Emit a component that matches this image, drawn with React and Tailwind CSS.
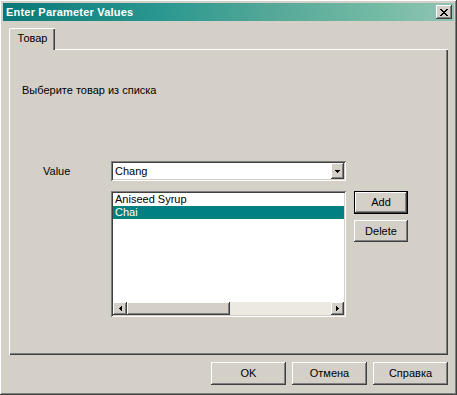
import React from "react";

const raised =
  "shadow-[inset_-1px_-1px_#404040,inset_1px_1px_#ffffff,inset_-2px_-2px_#808080]";
const sunken =
  "shadow-[inset_1px_1px_#808080,inset_-1px_-1px_#ffffff,inset_2px_2px_#404040,inset_-2px_-2px_#d4d0c8]";

function Button({ children, className = "" }) {
  return (
    <button
      className={`bg-[#d4d0c8] ${raised} flex items-center justify-center font-normal text-[11px] leading-[13px] text-black ${className}`}
    >
      {children}
    </button>
  );
}

export default function App() {
  return (
    <div
      className="w-[457px] h-[395px] bg-[#d4d0c8] p-[3px] flex flex-col shadow-[inset_-1px_-1px_#404040,inset_1px_1px_#ffffff,inset_-2px_-2px_#808080] text-black"
      style={{ fontFamily: '"Liberation Sans", Arial, sans-serif' }}
    >
      {/* title bar */}
      <div className="h-[18px] flex items-center justify-between pl-[3px] pr-[2px] bg-[linear-gradient(90deg,#0a7878_0%,#2a9890_35%,#55a898_60%,#76bca6_85%,#92c4b6_100%)]">
        <span className="text-white font-bold text-[11px] leading-[14px] tracking-[0.2px]">
          Enter Parameter Values
        </span>
        <button className={`w-[16px] h-[14px] bg-[#d4d0c8] ${raised} flex items-center justify-center`}>
          <svg width="8" height="7" viewBox="0 0 8 7" shapeRendering="crispEdges">
            <path d="M0 0h2v1h-2zM6 0h2v1h-2zM1 1h2v1h-2zM5 1h2v1h-2zM2 2h4v1h-4zM3 3h2v1h-2zM2 4h4v1h-4zM1 5h2v1h-2zM5 5h2v1h-2zM0 6h2v1h-2zM6 6h2v1h-2z" fill="#000" />
          </svg>
        </button>
      </div>

      {/* tab strip */}
      <div className="mt-[7px] ml-[6px] flex relative z-10 -mb-[1px]">
        <div className="w-[46px] h-[22px] bg-[#d4d0c8] border-t border-l border-white rounded-tl-[2px] shadow-[inset_-1px_0_#404040,inset_-2px_0_#808080] flex items-center justify-center text-[11px] leading-[13px] pb-[2px]">
          Товар
        </div>
      </div>

      {/* tab panel */}
      <div className="ml-[6px] w-[439px] h-[306px] border-t border-l border-white shadow-[inset_-1px_-1px_#404040,inset_-2px_-2px_#808080] pt-[34px] flex flex-col">
        <div className="pl-[12px] text-[11px] leading-[13px]">Выберите товар из списка</div>

        <div className="mt-[64px] flex items-center">
          <div className="w-[101px] pl-[33px] text-[11px] leading-[13px]">Value</div>
          <div className={`w-[235px] h-[20px] bg-white ${sunken} p-[2px] flex items-center`}>
            <span className="flex-1 pl-[2px] text-[11px] leading-[13px]">Chang</span>
            <div className={`w-[13px] h-[16px] bg-[#d4d0c8] ${raised} flex items-center justify-center`}>
              <svg width="5" height="3" viewBox="0 0 5 3" shapeRendering="crispEdges">
                <path d="M0 0h5v1h-5zM1 1h3v1h-3zM2 2h1v1h-1z" fill="#000" />
              </svg>
            </div>
          </div>
        </div>

        <div className="mt-[10px] flex items-start">
          <div className="w-[101px]" />
          <div className={`w-[235px] h-[126px] bg-white ${sunken} p-[2px] flex flex-col`}>
            <div className="flex-1 flex flex-col text-[11px] leading-[13px]">
              <div className="h-[13px] pl-[2px]">Aniseed Syrup</div>
              <div className="h-[13px] pl-[2px] bg-[#008080] text-white">Chai</div>
            </div>
            <div className="h-[13px] flex bg-[#ece9e1]">
              <div className={`w-[14px] h-[13px] bg-[#d4d0c8] ${raised} flex items-center justify-center`}>
                <svg width="3" height="5" viewBox="0 0 3 5" shapeRendering="crispEdges">
                  <path d="M2 0h1v5h-1zM1 1h1v3h-1zM0 2h1v1h-1z" fill="#000" />
                </svg>
              </div>
              <div className={`w-[103px] h-[13px] bg-[#d4d0c8] ${raised}`} />
              <div className="flex-1" />
              <div className={`w-[13px] h-[13px] bg-[#d4d0c8] ${raised} flex items-center justify-center`}>
                <svg width="3" height="5" viewBox="0 0 3 5" shapeRendering="crispEdges">
                  <path d="M0 0h1v5h-1zM1 1h1v3h-1zM2 2h1v1h-1z" fill="#000" />
                </svg>
              </div>
            </div>
          </div>
          <div className="ml-[8px] flex flex-col gap-[6px]">
            <div className="border border-black">
              <Button className="w-[52px] h-[21px]">Add</Button>
            </div>
            <Button className="w-[54px] h-[22px]">Delete</Button>
          </div>
        </div>
      </div>

      {/* bottom buttons */}
      <div className="mt-[7px] mr-[6px] flex justify-end gap-[6px]">
        <Button className="w-[75px] h-[23px]">OK</Button>
        <Button className="w-[75px] h-[23px]">Отмена</Button>
        <Button className="w-[75px] h-[23px]">Справка</Button>
      </div>
    </div>
  );
}
